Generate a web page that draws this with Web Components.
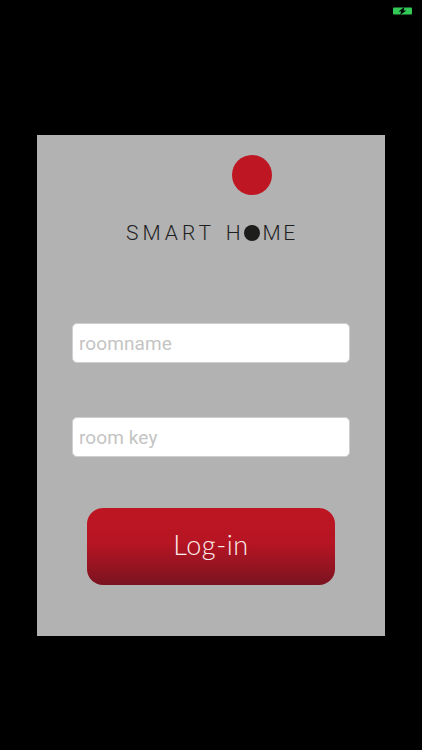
<!DOCTYPE html>
<html lang="en">
<head>
<meta charset="utf-8">
<title>Smart Home</title>
<style>
  html, body { margin: 0; height: 100%; background: #000; }
</style>
</head>
<body>
<login-screen>
  <smart-logo></smart-logo>
  <room-field>roomname</room-field>
  <room-field>room key</room-field>
  <login-button>Log-in</login-button>
</login-screen>

<script>
class LoginScreen extends HTMLElement {
  constructor() {
    super();
    this.attachShadow({ mode: 'open' }).innerHTML = `<style>
      :host { display: block; width: 422px; height: 750px; background: #000; overflow: hidden; }
      .status { height: 135px; box-sizing: border-box; padding: 7px 10px 0 0; display: flex; justify-content: flex-end; align-items: flex-start; }
      .status svg { display: block; }
      .card { width: 348px; height: 501px; margin-left: 37px; box-sizing: border-box; background: #b2b2b2; padding: 20px 35px 0; display: flex; flex-direction: column; }
    </style>
    <div class="status">
      <svg width="19" height="8" viewBox="0 0 19 8">
        <rect x="0" y="0.5" width="19" height="7" rx="1" fill="#33c957"/>
        <path fill="#000" d="M11.5 0L5.5 4.6H8.2L7 8L13.5 3.4H10.6Z"/>
      </svg>
    </div>
    <div class="card"><slot></slot></div>`;
  }
}

class SmartLogo extends HTMLElement {
  constructor() {
    super();
    this.attachShadow({ mode: 'open' }).innerHTML = `<style>
      :host { display: block; height: 168px; font: 300 21px "Roboto", "Open Sans", sans-serif; color: #1f1f1f; }
      .mark { width: 40px; height: 40px; border-radius: 50%; background: #be1622; margin-left: 160px; }
      .name { margin-top: 26px; padding-left: 54px; display: flex; align-items: center; height: 24px; letter-spacing: 4px; word-spacing: 2px; white-space: nowrap; }
      .dot { width: 16px; height: 16px; border-radius: 50%; background: #1d1d1b; margin: 0 3px 0 -1px; }
      .end { letter-spacing: 2.5px; }
    </style>
    <div class="mark"></div>
    <div class="name"><span>SMART H</span><span class="dot"></span><span class="end">ME</span></div>`;
  }
}

class RoomField extends HTMLElement {
  constructor() {
    super();
    this.attachShadow({ mode: 'open' }).innerHTML = `<style>
      :host { display: flex; align-items: center; height: 40px; box-sizing: border-box; padding: 0 6px; margin-bottom: 54px; background: #fff; border-radius: 5px; border: 1px solid #cfcfcf; font: 400 19px "Roboto", "Inter", sans-serif; letter-spacing: 0.1px; color: #c4c4c4; white-space: nowrap; }
    </style><slot></slot>`;
  }
}

class LoginButton extends HTMLElement {
  constructor() {
    super();
    this.attachShadow({ mode: 'open' }).innerHTML = `<style>
      :host { display: flex; align-items: center; justify-content: center; height: 77px; width: 248px; margin: -3px 0 0 15px; padding-bottom: 4px; box-sizing: border-box; border-radius: 16px; background: linear-gradient(#be1622 0%, #b61523 45%, #9c1422 70%, #7a1320 100%); color: #fbeeee; font: 300 27px "Lato", "Open Sans", sans-serif; letter-spacing: 0.6px; cursor: pointer; }
    </style><slot></slot>`;
  }
}

customElements.define('login-screen', LoginScreen);
customElements.define('smart-logo', SmartLogo);
customElements.define('room-field', RoomField);
customElements.define('login-button', LoginButton);
</script>
</body>
</html>
